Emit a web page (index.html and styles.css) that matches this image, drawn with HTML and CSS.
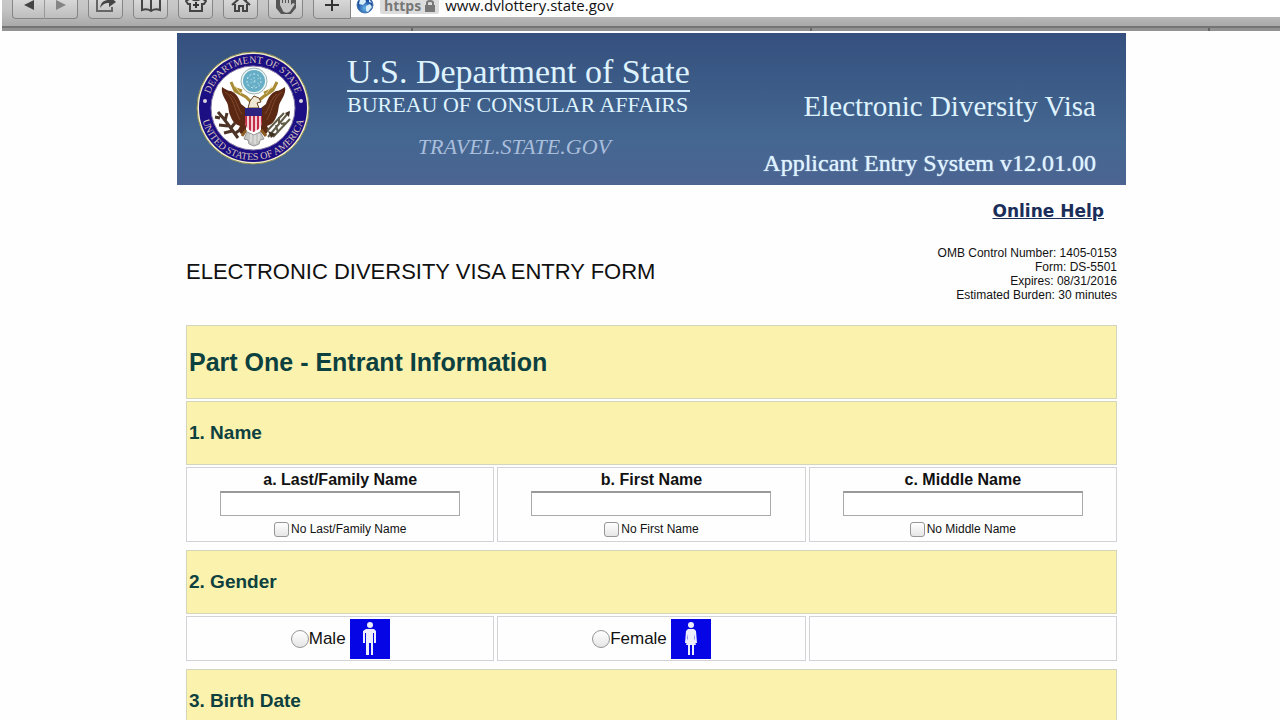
FILE: index.html
```html
<!DOCTYPE html>
<html lang="en">
<head>
<meta charset="utf-8">
<title>Electronic Diversity Visa Entry Form</title>
<link rel="stylesheet" href="styles.css">
</head>
<body>
<div class="browser">
  <div class="toolbar">
    <div class="nav-pair">
      <button class="tool" aria-label="Back"><svg width="12" height="12" viewBox="0 0 12 12"><path d="M11 1v10L1 6z" fill="#444"/></svg></button>
      <button class="tool" aria-label="Forward"><svg width="12" height="12" viewBox="0 0 12 12"><path d="M1 1v10l10-5z" fill="#858585"/></svg></button>
    </div>
    <button class="tool" aria-label="Share"><svg width="22" height="22" viewBox="0 0 22 22"><path d="M9 5H2v12h15v-4" fill="none" stroke="#666" stroke-width="2"/><path d="M5 14c1-6 4-8 9-8V2l7 6-7 5V9c-4 0-6 1-9 5z" fill="#444"/></svg></button>
    <button class="tool" aria-label="Bookmarks"><svg width="22" height="22" viewBox="0 0 22 22"><path d="M11 5C8 3 5 3 2 4v12c3-1 6-1 9 1 3-2 6-2 9-1V4c-3-1-6-1-9 1zv12" fill="none" stroke="#444" stroke-width="2"/></svg></button>
    <button class="tool" aria-label="Top sites"><svg width="22" height="22" viewBox="0 0 22 22"><path d="M1 7l5-3c2 3 8 3 10 0l5 3-2 3h-2v7H5v-7H3z" fill="none" stroke="#444" stroke-width="2"/><path d="M11 8v6M8 11h6" stroke="#333" stroke-width="2"/></svg></button>
    <button class="tool" aria-label="Home"><svg width="22" height="22" viewBox="0 0 22 22"><path d="M2 11l9-8 9 8M5 10v7h4v-5h4v5h4v-7M16 3v4" fill="none" stroke="#444" stroke-width="2"/></svg></button>
    <button class="tool" aria-label="Blocker"><svg width="22" height="24" viewBox="0 0 22 24"><path d="M6 0h10l5 6v9l-5 6H6l-5-6V6z" fill="#555"/><path d="M5 12V6h2v4h1V4h2v6h1V4h2v6h1V6h2v6l2-2 2 1-4 6c-2 4-7 3-8 1z" fill="#c4c4c4"/></svg></button>
    <button class="tool tool-add" aria-label="Add bookmark"><svg width="14" height="14" viewBox="0 0 14 14"><path d="M7 0v13M0 7h14" stroke="#333" stroke-width="2"/></svg></button>
    <div class="address">
      <svg width="18" height="18" viewBox="0 0 18 18"><defs><radialGradient id="globe" cx=".5" cy=".7"><stop offset="0" stop-color="#69b7ec"/><stop offset="1" stop-color="#174b9c"/></radialGradient></defs><circle cx="9" cy="9" r="8" fill="url(#globe)" stroke="#4a76ad"/><path d="M4 3l5-1 1 4-3 3-4-1zM10 10l4-2 2 3-4 5-2-1zM13 3l3 4-3-1z" fill="#d7edf7"/></svg>
      <span class="secure">https<svg width="10" height="12" viewBox="0 0 10 12"><path d="M2 6V3a3 2 0 0 1 6 0v3" fill="none" stroke="#777" stroke-width="2"/><path d="M0 5h10v7H0z" fill="#777"/></svg></span>
      <input class="url" type="text" aria-label="Address" value="www.dvlottery.state.gov">
    </div>
  </div>
  <div class="tabstrip"><i></i><i></i><i></i></div>
</div>

<main class="page">
  <header class="banner">
    <svg class="seal" width="114" height="114" viewBox="0 0 114 114" role="img" aria-label="Department of State seal">
      <defs>
        <path id="arc-top" d="M12 57a45 45 0 0 1 90 0"/>
        <path id="arc-bottom" d="M5 57a52 52 0 0 0 104 0"/>
        <clipPath id="shield"><path d="M49 57h17v14q0 7-9 10q-8-3-8-10z"/></clipPath>
      </defs>
      <circle cx="57" cy="57" r="56" fill="#f3f0d2" stroke="#8d8c4b"/>
      <circle cx="57" cy="57" r="54" fill="#1b0f83"/>
      <circle cx="57" cy="57" r="42" fill="#fff" stroke="#8a7ca5"/>
      <g class="seal-text">
        <text><textPath href="#arc-top" startOffset="50%">DEPARTMENT OF STATE</textPath></text>
        <text><textPath href="#arc-bottom" startOffset="50%">UNITED STATES OF AMERICA</textPath></text>
      </g>
      <circle cx="9" cy="50" r="2" fill="#ddd3df"/><circle cx="105" cy="50" r="2" fill="#ddd3df"/>
      <path d="M35 31l4 9 11 6 5 5M81 31l-4 8-10 7-6 5M37 37l9 3M77 38l-9 4" fill="none" stroke="#a88b35" stroke-width="3"/>
      <path d="M39 35l6 8M76 35l-6 8" stroke="#e8d795" stroke-width="1"/>
      <path d="M26 36c3 2 6 4 9 4 5 2 8 7 10 13l5 4v24l-5 2-3-4 2-4c-7-2-8-7-10-11-2-5-1-10-4-14-2-4-5-8-4-14z" fill="#5b2813"/>
      <path d="M89 36c-3 2-6 4-9 4-5 2-8 7-10 13l-5 4v24l5 2 3-4-2-4c7-2 8-7 10-11 2-5 1-10 4-14 2-4 5-8 4-14z" fill="#5b2813"/>
      <path d="M29 41c9 5 9 17 15 28M34 43c7 5 7 14 12 20M86 41c-9 5-9 17-15 28M81 43c-7 5-7 14-12 20" fill="none" stroke="#82492b" stroke-width="1"/>
      <path d="M52 57l2-7 4-5 5 2 2 4-4 1 2 5z" fill="#eee8d5" stroke="#64401e"/>
      <circle cx="58" cy="30" r="13" fill="#eef6f5" stroke="#9bb5b8"/>
      <circle cx="58" cy="30" r="11" fill="#66adc6"/>
      <circle cx="58" cy="30" r="7" fill="none" stroke="#c7e7ee" stroke-dasharray="2 2"/>
      <path d="M58 22v16M51 26l14 8M51 34l14-8" stroke="#a1d5e2" stroke-dasharray="2 2"/>
      <g clip-path="url(#shield)"><path d="M48 56h20v26H48z" fill="#f2cfd3"/><path d="M50 62v20M54 62v20M58 62v20M62 62v20M66 62v20" stroke="#c32e48" stroke-width="2"/><path d="M48 56h20v9H48z" fill="#2c2380"/></g>
      <path d="M50 79l-4 6M65 79l5 6" stroke="#8a5b22" stroke-width="3"/>
      <path d="M51 81l-3 7 4 1 1 4 5 2 5-2 1-4 4-1-4-7-6 3z" fill="#c7c7c4" stroke="#969696"/><path d="M55 83v8M59 84v9M63 83v7" stroke="#eee"/>
      <path d="M22 61l6 7 6 8 8 11M24 67l-5-1M29 70l2-8M32 75l-9-1M34 78l5-6M36 80l-8 2M38 83l6-4" fill="none" stroke="#4c3526" stroke-width="3"/>
      <path d="M93 61L72 86M88 62L71 80M94 68L77 86M90 72l-5 1M83 66v7M80 74l2 8" fill="none" stroke="#615c48" stroke-width="2"/><path d="M72 80l8 3-5 4zM89 62l5-2-1 6z" fill="#413323"/>
    </svg>
    <div class="agency">
      <div class="dept">U.S. Department of State</div>
      <div class="bureau">BUREAU OF CONSULAR AFFAIRS</div>
      <div class="travel">TRAVEL.STATE.GOV</div>
    </div>
    <div class="system">
      <div class="program">Electronic Diversity Visa</div>
      <div class="version">Applicant Entry System v12.01.00</div>
    </div>
  </header>

  <div class="help"><a href="#">Online Help</a></div>

  <form class="content">
    <div class="title-row">
      <h1>ELECTRONIC DIVERSITY VISA ENTRY FORM</h1>
      <p class="omb">OMB Control Number: 1405-0153<br>Form: DS-5501<br>Expires: 08/31/2016<br>Estimated Burden: 30 minutes</p>
    </div>

    <h2 class="band part">Part One - Entrant Information</h2>

    <section class="question">
      <h3 class="band">1. Name</h3>
      <div class="cells">
        <div class="cell name">
          <label class="name-label" for="last">a. Last/Family Name</label>
          <input class="field" id="last" type="text">
          <label class="none"><input class="check" type="checkbox">No Last/Family Name</label>
        </div>
        <div class="cell name">
          <label class="name-label" for="first">b. First Name</label>
          <input class="field" id="first" type="text">
          <label class="none"><input class="check" type="checkbox">No First Name</label>
        </div>
        <div class="cell name">
          <label class="name-label" for="middle">c. Middle Name</label>
          <input class="field" id="middle" type="text">
          <label class="none"><input class="check" type="checkbox">No Middle Name</label>
        </div>
      </div>
    </section>

    <section class="question">
      <h3 class="band">2. Gender</h3>
      <div class="cells">
        <div class="cell gender">
          <label><input class="radio" type="radio" name="gender">Male</label>
          <svg width="40" height="40" viewBox="0 0 40 40"><path d="M0 0h40v40H0z" fill="#0505e6"/><circle cx="20" cy="6" r="3" fill="#eef"/><path d="M16 10h8l2 2v12h-2v-10h-1v22h-2V24h-2v12h-3V14h-1v10h-2V12z" fill="#eef"/></svg>
        </div>
        <div class="cell gender">
          <label><input class="radio" type="radio" name="gender">Female</label>
          <svg width="40" height="40" viewBox="0 0 40 40"><path d="M0 0h40v40H0z" fill="#0505e6"/><circle cx="20" cy="6" r="3" fill="#eef"/><path d="M17 10h6l2 2 1 12h-2l-1-9v4l2 7h-2v10h-2V26h-2v10h-2V26h-2l2-7v-4l-1 9h-2l1-12z" fill="#eef"/></svg>
        </div>
        <div class="cell gender"></div>
      </div>
    </section>

    <section class="question">
      <h3 class="band">3. Birth Date</h3>
    </section>
  </form>
</main>
</body>
</html>
```
FILE: styles.css
```css
* { box-sizing: border-box; }
html { height: 100%; }
body {
  margin: 0;
  height: 100%;
  overflow: hidden;
  background: #fefefe;
  color: #111;
  font-family: "Liberation Sans", Arial, sans-serif;
}
button, input { font: inherit; }

/* Browser chrome; its upper part is scrolled off the window */
.browser { margin: -16px 0 0 2px; }
.toolbar {
  display: flex;
  align-items: center;
  gap: 10px;
  height: 42px;
  padding-left: 10px;
  background: linear-gradient(#d0d0d0, #c4c4c4 60%, #a9a9a9);
}
.tool {
  display: flex;
  align-items: center;
  justify-content: center;
  width: 35px;
  height: 27px;
  padding: 0;
  border: 1px solid #858585;
  border-radius: 4px;
  background: linear-gradient(#e2e2e2, #bdbdbd);
}
.nav-pair { display: flex; }
.nav-pair .tool { width: 33px; }
.nav-pair .tool:first-child { border-right-color: #999; border-radius: 4px 0 0 4px; }
.nav-pair .tool:last-child { border-left: 0; border-radius: 0 4px 4px 0; }
.tool-add { width: 38px; border-radius: 4px 0 0 4px; }
.address {
  display: flex;
  flex: 1;
  align-items: center;
  gap: 6px;
  height: 24px;
  margin-left: -10px;
  padding-left: 5px;
  background: #fff;
}
.secure {
  display: flex;
  align-items: center;
  gap: 4px;
  height: 18px;
  padding: 2px 4px 0;
  border-radius: 2px;
  background: #dcdcdc;
  color: #777;
  font: bold 14px/10px "Open Sans", sans-serif;
}
.url {
  flex: 1;
  height: 24px;
  padding: 0;
  border: 0;
  background: none;
  color: #111;
  font: 500 15px "Open Sans", sans-serif;
}
.tabstrip {
  display: flex;
  justify-content: space-between;
  height: 5px;
  padding: 0 70px 0 409px;
  border-top: 2px solid #747474;
  background: #929292;
}
.tabstrip i { width: 2px; background: #666; }

.page { padding: 2px 154px 0 177px; }

.banner {
  display: flex;
  height: 152px;
  padding: 0 30px 0 19px;
  background: linear-gradient(#35507e, #446791 70%, #4c6492);
  color: #dff3ff;
  font-family: "Liberation Serif", "Times New Roman", serif;
  white-space: nowrap;
}
.seal { margin-top: 18px; }
.seal-text {
  fill: #d9c4bd;
  font: 10px "Liberation Serif", serif;
  text-anchor: middle;
}
.agency { margin: 21px auto 0 37px; }
.dept {
  border-bottom: 2px solid #cfeaff;
  font-size: 34px;
  line-height: 36px;
}
.bureau { font-size: 22px; line-height: 26px; }
.travel {
  margin-top: 16px;
  padding-right: 8px;
  color: #a9bedb;
  font-size: 22px;
  font-style: italic;
  line-height: 26px;
  text-align: center;
}
.system { padding-top: 56px; text-align: right; }
.program { font-size: 29px; line-height: 34px; }
.version {
  margin-top: 27px;
  font-size: 24px;
  line-height: 26px;
  text-shadow: 0 0 1px #dff3ff;
}

.help { padding: 15px 22px 0 0; text-align: right; }
.help a {
  color: #1b2e59;
  font: bold 17px/22px "DejaVu Sans", Verdana, sans-serif;
}

.content { padding: 0 9px; }
.title-row {
  display: flex;
  align-items: center;
  justify-content: space-between;
  margin: 24px 0 23px;
}
h1 { margin: 0 0 4px; font-size: 22px; font-weight: 400; line-height: 26px; }
.omb { margin: 0; font-size: 12px; line-height: 14px; text-align: right; }

.band {
  display: flex;
  align-items: center;
  min-height: 64px;
  margin: 0 0 2px;
  padding: 0 2px;
  border: 1px solid #d4d5bd;
  background: #fbf2ae;
  color: #0d4140;
  font-size: 19px;
  line-height: 24px;
}
.part { min-height: 74px; font-size: 25px; line-height: 32px; }
.question { margin-bottom: 8px; }

.cells { display: grid; grid-template-columns: repeat(3, 1fr); gap: 3px; }
.cell { display: flex; align-items: center; border: 1px solid #d3d3d7; }
.name { flex-direction: column; min-height: 75px; padding-top: 2px; }
.name-label { font-size: 16px; font-weight: 700; line-height: 20px; }
.field {
  width: 240px;
  max-width: 90%;
  height: 25px;
  margin-top: 1px;
  border: 1px solid #aaa;
  border-top: 2px solid #999;
  background: #fff;
}
.none { display: flex; align-items: center; gap: 2px; margin-top: 5px; font-size: 12px; line-height: 16px; }
.check, .radio {
  appearance: none;
  flex: none;
  margin: 0;
  border: 1px solid #969696;
  background: linear-gradient(#fff, #e6e6e6);
}
.check { width: 15px; height: 15px; border-radius: 3px; }
.radio { width: 18px; height: 18px; border-radius: 50%; }
.gender { justify-content: center; gap: 4px; min-height: 45px; }
.gender label { display: flex; align-items: center; font-size: 17px; line-height: 20px; }
```
